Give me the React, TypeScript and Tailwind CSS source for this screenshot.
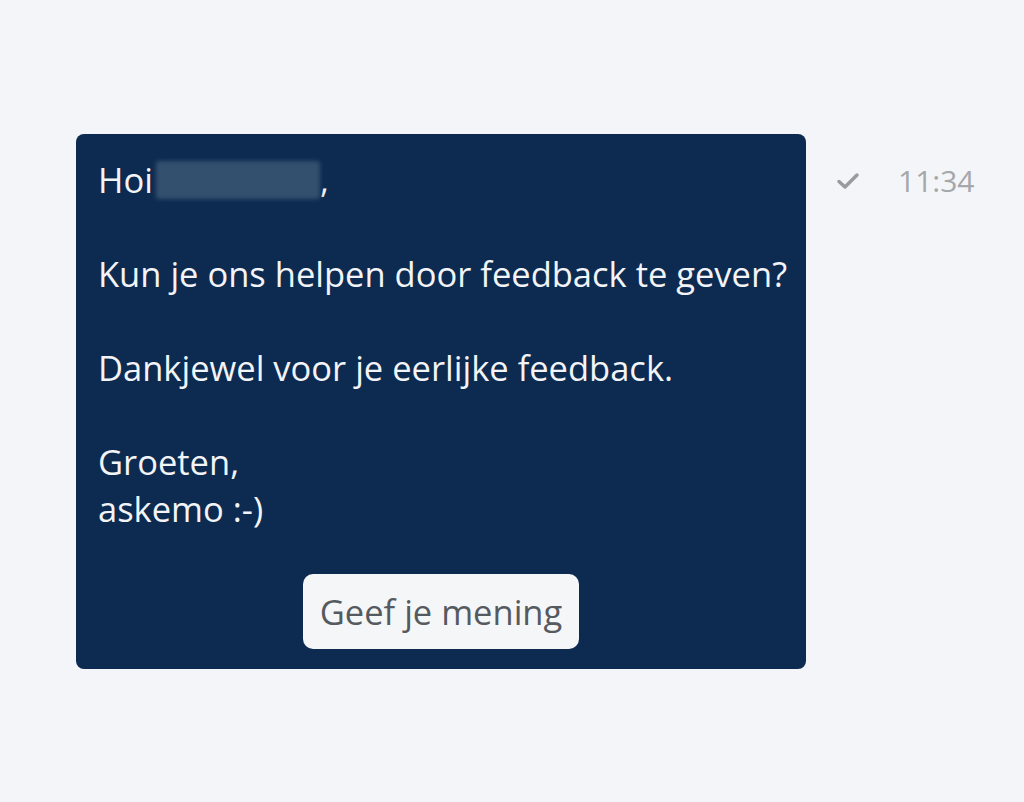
import React from "react";

export default function App() {
  return (
    <div
      className="w-[1024px] h-[802px] bg-[#f4f5f8] flex items-start pt-[134px] pl-[76px]"
      style={{ fontFamily: '"Open Sans", "Noto Sans", sans-serif' }}
    >
      <div className="w-[730px] h-[535px] bg-[#0d2a50] rounded-[8px] pl-[22px] pr-[10px] pt-[22px] flex flex-col">
        <div className="text-[34.5px] leading-[47px] text-[#f2f4f7] whitespace-nowrap">
          <div className="flex items-center">
            <span>Hoi</span>
            <span className="inline-block w-[164px] h-[38px] ml-[3px] bg-[#34506f] blur-[2px] rounded-[2px]"></span>
            <span>,</span>
          </div>
          <div className="h-[47px]"></div>
          <div>Kun je ons helpen door feedback te geven?</div>
          <div className="h-[47px]"></div>
          <div>Dankjewel voor je eerlijke feedback.</div>
          <div className="h-[47px]"></div>
          <div>Groeten,</div>
          <div>askemo :-)</div>
        </div>
        <div className="flex justify-center mt-[42px] pr-[12px]">
          <button className="w-[276px] h-[75px] bg-[#f5f6f8] rounded-[10px] text-[34.5px] text-[#555a60]">
            Geef je mening
          </button>
        </div>
      </div>
      <div className="flex items-center mt-[32px] ml-[30px] gap-[38px]">
        <svg width="24" height="20" viewBox="0 0 24 20" fill="none">
          <path d="M3 10.5 L9 16 L21 4" stroke="#9a9a9e" strokeWidth="3.5" strokeLinecap="round" strokeLinejoin="round" />
        </svg>
        <span className="text-[30px] text-[#a5a7ab] leading-none">11:34</span>
      </div>
    </div>
  );
}
